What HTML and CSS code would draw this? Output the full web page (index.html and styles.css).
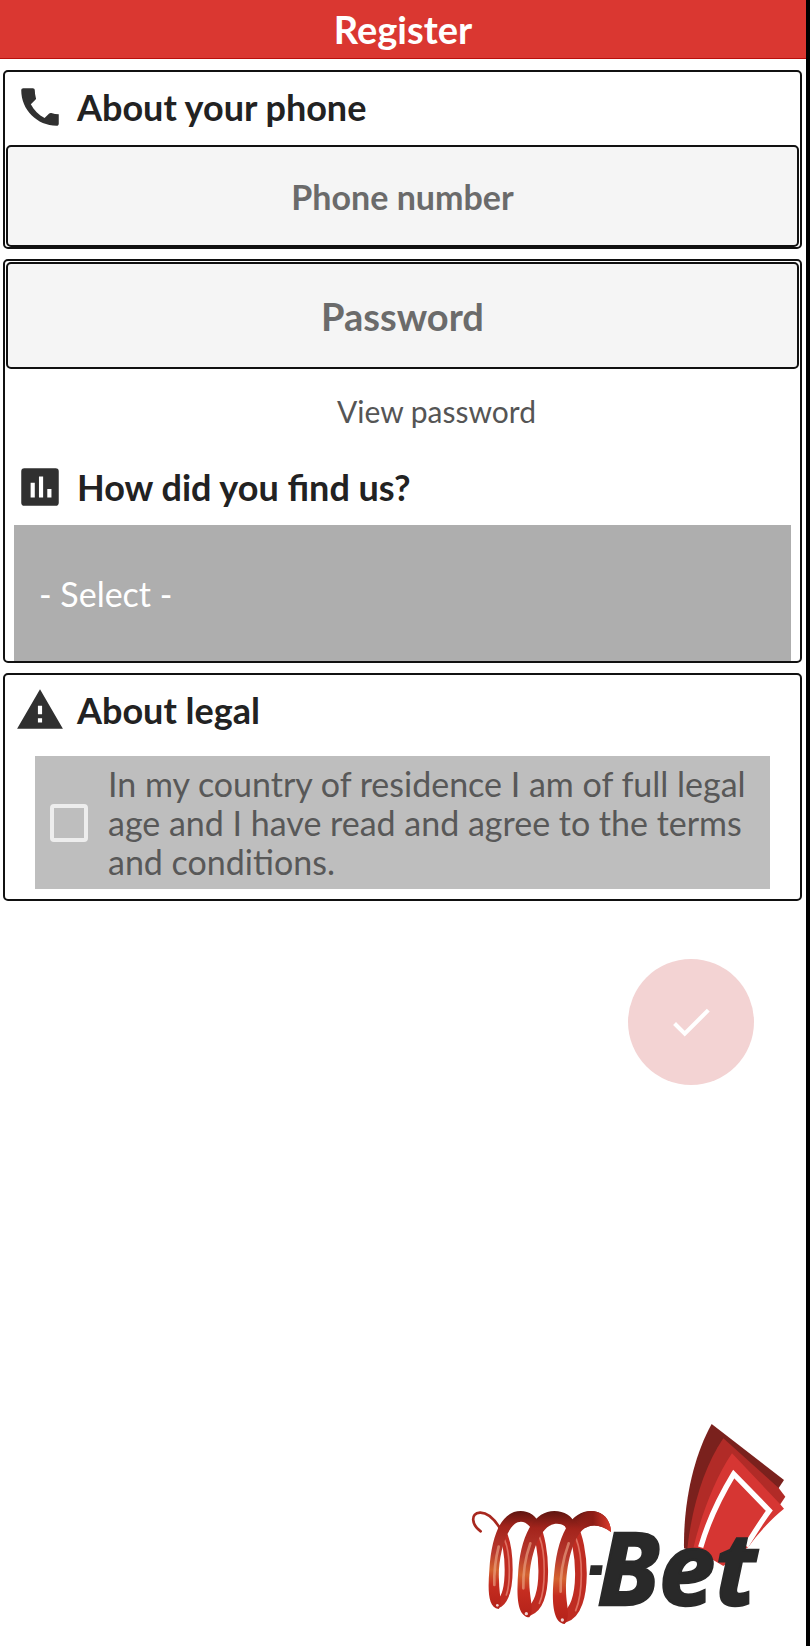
FILE: index.html
```html
<!DOCTYPE html>
<html lang="en">
<head>
<meta charset="utf-8">
<meta name="viewport" content="width=device-width, initial-scale=1">
<title>Register</title>
<link rel="stylesheet" href="styles.css">
</head>
<body>
<header class="topbar"><h1>Register</h1></header>
<form class="form">
  <section class="card">
    <h2 class="heading">
      <svg class="icon" viewBox="0 0 24 24" aria-hidden="true"><path d="M21 15.5c-1.200 0-2.400-.2-3.600-.6-.3-.1-.7 0-1 .2l-2.200 2.200c-2.800-1.400-5.100-3.800-6.600-6.600l2.200-2.200c.3-.3.4-.7.200-1-.3-1.100-.5-2.300-.5-3.500 0-.6-.4-1-1-1H4c-.6 0-1 .4-1 1 0 9.400 7.600 17 17 17 .6 0 1-.4 1-1z"/></svg>
      <label for="phone">About your phone</label>
    </h2>
    <input class="field" id="phone" type="tel" placeholder="Phone number">
  </section>
  <section class="card">
    <input class="field field-large" type="password" placeholder="Password" aria-label="Password">
    <button class="view" type="button">View password</button>
    <h2 class="heading">
      <svg class="icon" viewBox="0 0 24 24" aria-hidden="true"><path fill-rule="evenodd" d="M4.500 3h15A1.500 1.500 0 0 1 21 4.500v15a1.500 1.500 0 0 1-1.500 1.500h-15A1.500 1.500 0 0 1 3 19.500v-15A1.500 1.500 0 0 1 4.500 3zM7.500 10v7h2v-7zM11.500 7v10h2V7zM15.500 13v4h2v-4z"/></svg>
      <label for="source">How did you find us?</label>
    </h2>
    <select class="select" id="source"><option>- Select -</option></select>
  </section>
  <section class="card card-legal">
    <h2 class="heading">
      <svg class="icon" viewBox="0 0 24 24" aria-hidden="true"><path d="M1 21h22L12 2zm12-3h-2v-2h2zm0-4h-2v-4h2z"/></svg>
      <span>About legal</span>
    </h2>
    <label class="terms">
      <input class="tick" type="checkbox">
      <span>In my country of residence I am of full legal age and I have read and agree to the terms and conditions.</span>
    </label>
  </section>
  <button class="submit" type="submit" aria-label="Confirm">
    <svg viewBox="0 0 24 24" aria-hidden="true"><path d="M9 16.200 4.800 12l-1.400 1.400L9 19 21 7l-1.400-1.400z"/></svg>
  </button>
</form>
<footer class="footer">
  <svg class="logo" viewBox="30 30 948 675" role="img" aria-label="M-Bet">
    <defs>
      <linearGradient id="coil" x1="0" y1="0" x2="0" y2="1">
        <stop offset="0" stop-color="#5e1510"/><stop offset=".16" stop-color="#a3241c"/>
        <stop offset=".42" stop-color="#b8392e"/><stop offset=".6" stop-color="#d4632f"/>
        <stop offset=".75" stop-color="#c52d20"/><stop offset="1" stop-color="#b32119"/>
      </linearGradient>
      <linearGradient id="tip" x1="0" y1="0" x2="1" y2="0">
        <stop offset="0" stop-color="#a3241c" stop-opacity="0"/><stop offset=".5" stop-color="#8c1d16"/><stop offset="1" stop-color="#dc3a2c"/>
      </linearGradient>
    </defs>
    <path fill="#7a211d" d="M755 42 972 210 956 234 800 460 672 415C670 280 700 140 755 42z"/>
    <path fill="#b12b27" d="M790 85 956 234 976 260 960 284 800 460 682 415C696 290 732 170 790 85z"/>
    <path fill="#d63633" d="M816 130 960 282 972 296C930 330 890 375 866 410L790 468 700 415C722 320 765 205 816 130z"/>
    <path fill="none" stroke="#fff" stroke-width="16" d="M722 412C744 335 780 260 821 192L928 302C903 335 882 370 858 408"/>
    <g fill="none" stroke-linecap="round">
      <path stroke="#a8281f" stroke-width="8" d="M62 364C35 345 30 310 60 308 86 307 105 330 122 358"/>
      <g stroke="#bf2c22">
        <path stroke-width="24" d="M126 365C150 410 158 550 118 580"/>
        <path stroke-width="29" d="M224 345C255 400 267 580 208 602"/>
        <path stroke-width="35" d="M332 345C370 400 382 600 314 620"/>
      </g>
      <g stroke="#df7162" stroke-width="5">
        <path d="M134 390C151 430 152 520 139 555"/>
        <path d="M238 380C258 430 257 540 238 580"/>
        <path d="M348 385C370 440 369 550 347 602"/>
      </g>
    </g>
    <g fill="url(#coil)">
      <path d="M116 597C82 594 84 535 88 480 95 370 126 303 182 303 209 304 229 317 236 340L216 360C202 334 181 329 164 342 130 370 113 460 117 510 117 550 128 584 116 597z"/>
      <path d="M208 622C168 620 170 545 175 480 184 370 224 303 283 303 313 303 337 318 344 342L326 361C314 342 291 335 269 347 229 369 207 460 208 520 209 570 224 602 208 622z"/>
      <path d="M314 642C272 638 276 550 283 485 294 375 332 303 392 303 427 303 452 327 453 366 427 346 397 339 374 355 338 381 318 465 318 540 318 587 334 617 314 642z"/>
    </g>
    <path fill="url(#tip)" d="M345 333C363 308 377 303 392 303 427 303 452 327 453 366 427 346 397 339 374 355z"/>
    <g fill="none" stroke="#efab8c" stroke-width="8" stroke-linecap="round" opacity=".6">
      <path d="M116 410Q101 470 103 525"/><path d="M211 400Q188 465 190 535"/><path d="M326 400Q299 475 302 545"/>
    </g>
    <g fill="#fff" opacity=".8"><circle cx="112" cy="586" r="4"/><circle cx="199" cy="611" r="5"/><circle cx="307" cy="630" r="5"/></g>
    <path fill="#292929" d="M392 466h36l-4 29h-36z"/>
    <text class="logo-text" x="412" y="585">Bet</text>
  </svg>
</footer>
</body>
</html>
```
FILE: styles.css
```css
* { box-sizing: border-box; }
body {
  margin: 0;
  min-height: 100vh;
  display: flex;
  flex-direction: column;
  background: #fff;
  border-right: 4px solid #000;
  color: #222;
  font-family: Lato, "Open Sans", sans-serif;
}
input, button, select { font: inherit; margin: 0; border-radius: 0; }
.topbar {
  height: 59px;
  display: flex;
  align-items: center;
  justify-content: center;
  background: #da3731;
  border-bottom: 1px solid #b80f0c;
  color: #fff;
}
.topbar h1 { margin: 0; font-size: 38px; line-height: 56px; font-weight: 700; }
.form {
  display: flex;
  flex-direction: column;
  gap: 10px;
  padding: 11px 4px 0 3px;
}
.card {
  display: flex;
  flex-direction: column;
  border: 2px solid #111;
  border-radius: 5px;
  padding: 1px 1px 0;
}
.heading {
  display: flex;
  align-items: center;
  gap: 12px;
  height: 72px;
  margin: 0;
  padding: 0 0 4px 9px;
  font-size: 36px;
  font-weight: 700;
}
.icon { width: 50px; height: 50px; flex: none; fill: #303030; }
.field {
  width: 100%;
  height: 102px;
  padding: 0 16px;
  border: 2px solid #111;
  border-radius: 5px;
  background: #f5f5f5;
  color: #222;
  font-size: 34px;
  font-weight: 700;
  text-align: center;
}
.field-large { height: 107px; font-size: 38px; }
.field::placeholder { color: #6b6b6b; opacity: 1; }
.view {
  height: 84px;
  padding: 0 0 0 68px;
  border: 0;
  background: none;
  color: #555;
  font-size: 30px;
}
.select {
  appearance: none;
  height: 136px;
  margin: 0 8px;
  padding: 0 25px;
  border: 0;
  background: #aeaeae;
  color: #fff;
  font-size: 34px;
}
.card-legal { padding-bottom: 10px; }
.terms {
  display: flex;
  align-items: center;
  gap: 20px;
  margin: 8px 29px 0;
  padding: 8px 20px 8px 15px;
  background: #bebebe;
  color: #585858;
  font-size: 34px;
  line-height: 39px;
}
.tick {
  appearance: none;
  flex: none;
  width: 38px;
  height: 38px;
  border: 4px solid #ededed;
  border-radius: 4px;
}
.submit {
  align-self: flex-end;
  display: grid;
  place-items: center;
  width: 126px;
  height: 126px;
  margin: 48px 48px 0 0;
  padding: 0;
  border: 0;
  border-radius: 50%;
  background: #f3d3d3;
}
.submit svg { width: 50px; height: 50px; fill: #fff; }
.footer {
  display: flex;
  justify-content: flex-end;
  margin-top: auto;
  padding: 24px 20px 1px;
}
.logo { width: 316px; height: auto; }
.logo-text {
  fill: #292929;
  stroke: #292929;
  stroke-width: 8px;
  font-family: "Open Sans", "Noto Sans", sans-serif;
  font-size: 300px;
  font-style: italic;
  font-weight: 700;
}
```
